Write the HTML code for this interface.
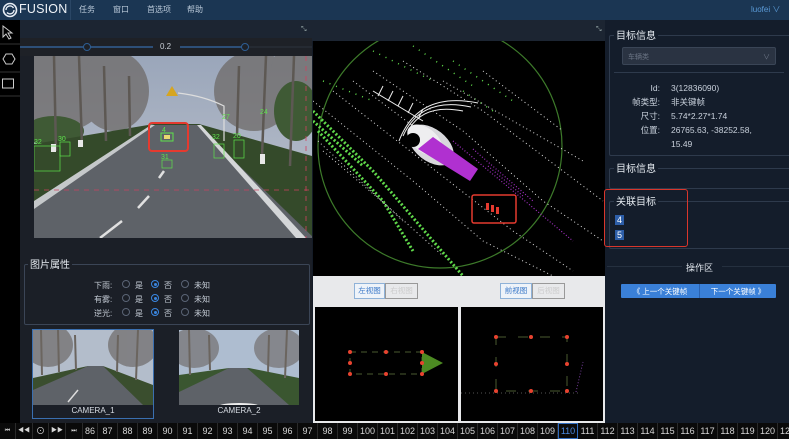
<!DOCTYPE html>
<html><head><meta charset="utf-8"><style>
*{margin:0;padding:0;box-sizing:border-box}
body{width:789px;height:439px;overflow:hidden;background:#141b26;font-family:"Liberation Sans","Noto Sans CJK SC",sans-serif;position:relative;color:#cfd6df}
.a{position:absolute}
.top{left:0;top:0;width:789px;height:20px;background:#1b3653}
.menu{top:4px;font-size:8px;color:#b9c8d8}
.tb{left:0;top:20px;width:20px;height:403px;background:#000}
.lp{left:20px;top:20px;width:292px;height:403px;background:#1b1f27}
.rp{left:605px;top:20px;width:184px;height:403px;background:#141d2b}
.fs{border:1px solid #3b4556;border-radius:2px}
.lg{font-size:10px;color:#e6ebf1;background:#1b1f27;padding:0 2px}
.rad{width:8px;height:8px;border:1px solid #5a6475;border-radius:50%}
.on{border-color:#3a86e0}
.on::after{content:"";position:absolute;left:1.5px;top:1.5px;width:3px;height:3px;border-radius:50%;background:#3a86e0}
.rl{font-size:8px;color:#c5ccd6}
.tl{top:423px;height:16px;background:#0a0a0a;font-size:9px;color:#d6d6d6;text-align:center;line-height:16px;border-right:1px solid #2a2a2a}
.info{font-size:8.5px;color:#c9d1dc}
</style></head><body>
<div class="a top"></div>
<svg class="a" style="left:2px;top:2px" width="16" height="16" viewBox="0 0 16 16"><circle cx="8" cy="8" r="6.5" fill="none" stroke="#e8eef5" stroke-width="1.6"/><path d="M4 8a4 4 0 0 1 7.5-2M12 8a4 4 0 0 1-7 2.5" fill="none" stroke="#e8eef5" stroke-width="1.4"/></svg>
<div class="a" style="left:19px;top:2px;font-size:12.5px;color:#eef2f7;letter-spacing:0.2px">FUSION</div>
<div class="a" style="left:70px;top:0;width:1px;height:20px;background:#2a4665"></div>
<div class="a menu" style="left:79px">任务</div>
<div class="a menu" style="left:113px">窗口</div>
<div class="a menu" style="left:147px">首选项</div>
<div class="a menu" style="left:187px">帮助</div>
<div class="a menu" style="left:751px;color:#5b9bd8">luofei ∨</div>

<div class="a tb"></div>
<svg class="a" style="left:0;top:22px" width="20" height="80"><path d="M3 4v11l3-3 3 5 2-1-3-5h4z" fill="none" stroke="#ccc" stroke-width="1"/><line x1="0" y1="22" x2="20" y2="22" stroke="#333"/><polygon points="6,32 12,32 15,37 12,42 6,42 3,37" fill="none" stroke="#ccc"/><line x1="0" y1="50" x2="20" y2="50" stroke="#333"/><rect x="2.5" y="57" width="11" height="9" fill="none" stroke="#ccc"/><line x1="0" y1="74" x2="20" y2="74" stroke="#333"/></svg>

<div class="a lp"></div>
<div class="a" style="left:20px;top:20px;width:292px;height:18px;background:#1c2532"></div>
<div class="a" style="left:301px;top:26px;font-size:7px;color:#9aa">⤡</div>
<div class="a" style="left:20px;top:38px;width:292px;height:18px;background:#1e2127"></div>
<div class="a" style="left:20px;top:46px;width:133px;height:2px;background:#2d4f78"></div>
<div class="a" style="left:180px;top:46px;width:65px;height:2px;background:#2d4f78"></div>
<div class="a" style="left:245px;top:46px;width:67px;height:2px;background:#252a32"></div>
<div class="a" style="left:83px;top:43px;width:8px;height:8px;border-radius:50%;border:1.5px solid #2d5d93;background:#1e2127"></div>
<div class="a" style="left:241px;top:43px;width:8px;height:8px;border-radius:50%;border:1.5px solid #2d5d93;background:#1e2127"></div>
<div class="a" style="left:160px;top:42px;font-size:8px;color:#c8ced6">0.2</div>

<svg class="a" style="left:34px;top:56px" width="278" height="182" viewBox="0 0 278 182">
<defs><linearGradient id="sky" x1="0" y1="0" x2="0" y2="1"><stop offset="0" stop-color="#9aa6ba"/><stop offset="1" stop-color="#bfc4ce"/></linearGradient></defs>
<rect width="278" height="182" fill="url(#sky)"/>
<g fill="#6e6a68" opacity="0.75"><ellipse cx="30" cy="30" rx="45" ry="45"/><ellipse cx="80" cy="35" rx="35" ry="40"/><ellipse cx="220" cy="35" rx="40" ry="40"/><ellipse cx="265" cy="30" rx="30" ry="50"/></g>
<g fill="#3f5a35"><ellipse cx="20" cy="75" rx="30" ry="15"/><ellipse cx="262" cy="55" rx="22" ry="30"/></g>
<polygon points="0,88 120,68 165,68 278,100 278,182 0,182" fill="#344a2a"/>
<polygon points="118,69 163,69 280,182 0,182 0,148" fill="#5e6268"/>
<polygon points="0,145 117,69 121,69 0,153" fill="#c5c8ca"/>
<polygon points="163,69 167,69 272,182 262,182" fill="#d4d6d8"/>
<g stroke="#5d5853" stroke-width="2.5"><line x1="20" y1="0" x2="22" y2="95"/><line x1="45" y1="0" x2="48" y2="90"/><line x1="70" y1="10" x2="72" y2="85"/><line x1="95" y1="20" x2="96" y2="80"/><line x1="205" y1="10" x2="203" y2="80"/><line x1="232" y1="0" x2="228" y2="100"/><line x1="260" y1="0" x2="256" y2="110"/></g>
<g fill="#e8e8e8"><rect x="17" y="88" width="5" height="8"/><rect x="44" y="84" width="5" height="7"/><rect x="226" y="98" width="5" height="10"/></g>
<polygon points="138,30 132,40 144,40" fill="#d6a520"/>
<path d="M144 37Q170 40 190 50V85" stroke="#ddd" fill="none" stroke-width="1.2"/>
<g stroke="#e0e0e0" stroke-width="2.5"><line x1="130" y1="115" x2="125" y2="122"/><line x1="115" y1="140" x2="104" y2="152"/><line x1="88" y1="165" x2="66" y2="182"/></g>
<line x1="0" y1="134" x2="278" y2="134" stroke="#d04060" stroke-dasharray="5,5" stroke-width="0.8"/>
<line x1="272" y1="0" x2="272" y2="182" stroke="#d04060" stroke-dasharray="5,5" stroke-width="0.8"/>
<rect x="115" y="67" width="39" height="28" rx="3" fill="none" stroke="#e53a2f" stroke-width="2"/>
<rect x="127" y="77" width="12" height="8" fill="none" stroke="#5de24b"/><rect x="130" y="79" width="6" height="4" fill="#e8d870"/>
<g fill="#5de24b" font-size="7" font-family="Liberation Sans"><text x="128" y="76">4</text><text x="127" y="103">31</text><text x="24" y="85">30</text><text x="0" y="88">32</text><text x="178" y="83">32</text><text x="199" y="82">20</text><text x="188" y="63">27</text><text x="226" y="58">24</text></g>
<g fill="none" stroke="#5de24b" stroke-width="0.7"><rect x="128" y="104" width="10" height="8"/><rect x="200" y="84" width="10" height="18"/><rect x="0" y="90" width="26" height="25"/><rect x="26" y="86" width="10" height="14"/><rect x="180" y="88" width="10" height="14"/></g>
</svg>

<div class="a" style="left:20px;top:238px;width:292px;height:185px;background:#1b1f27"></div>
<div class="a fs" style="left:24px;top:264px;width:286px;height:61px"></div>
<div class="a lg" style="left:28px;top:256px">图片属性</div>
<div class="a rl" style="left:94px;top:280px">下雨:</div>
<div class="a rl" style="left:94px;top:294px">有雾:</div>
<div class="a rl" style="left:94px;top:308px">逆光:</div>
<div class="a rad" style="left:122px;top:280px"></div><div class="a rl" style="left:135px;top:280px">是</div>
<div class="a rad on" style="left:151px;top:280px"></div><div class="a rl" style="left:164px;top:280px">否</div>
<div class="a rad" style="left:181px;top:280px"></div><div class="a rl" style="left:194px;top:280px">未知</div>
<div class="a rad" style="left:122px;top:294px"></div><div class="a rl" style="left:135px;top:294px">是</div>
<div class="a rad on" style="left:151px;top:294px"></div><div class="a rl" style="left:164px;top:294px">否</div>
<div class="a rad" style="left:181px;top:294px"></div><div class="a rl" style="left:194px;top:294px">未知</div>
<div class="a rad" style="left:122px;top:308px"></div><div class="a rl" style="left:135px;top:308px">是</div>
<div class="a rad on" style="left:151px;top:308px"></div><div class="a rl" style="left:164px;top:308px">否</div>
<div class="a rad" style="left:181px;top:308px"></div><div class="a rl" style="left:194px;top:308px">未知</div>

<div class="a" style="left:32px;top:329px;width:122px;height:90px;border:1px solid #3a6fb0;background:#1b1f27"></div>
<svg class="a" style="left:33px;top:330px" width="120" height="75"><rect width="120" height="75" fill="#b3bdcb"/><g fill="#6e6a68" opacity="0.7"><ellipse cx="15" cy="15" rx="25" ry="22"/><ellipse cx="100" cy="15" rx="25" ry="22"/></g><polygon points="0,48 55,36 70,36 120,55 120,75 0,75" fill="#3a4e2e"/><polygon points="55,36 70,36 110,75 0,75 0,60" fill="#5e6268"/><g stroke="#6b655f" stroke-width="2"><line x1="8" y1="0" x2="9" y2="45"/><line x1="25" y1="0" x2="26" y2="42"/><line x1="42" y1="5" x2="43" y2="40"/><line x1="85" y1="5" x2="84" y2="42"/><line x1="105" y1="0" x2="103" y2="50"/></g><line x1="45" y1="60" x2="35" y2="72" stroke="#ddd" stroke-width="1.5"/></svg>
<div class="a" style="left:33px;top:406px;width:120px;text-align:center;font-size:8px;color:#d8dde4">CAMERA_1</div>
<svg class="a" style="left:179px;top:330px" width="120" height="75"><rect width="120" height="75" fill="#aebdd0"/><g fill="#6e6a68" opacity="0.65"><ellipse cx="15" cy="18" rx="25" ry="20"/><ellipse cx="100" cy="18" rx="25" ry="20"/></g><polygon points="0,45 50,38 70,38 120,48 120,75 0,75" fill="#3a5630"/><polygon points="50,38 68,38 110,75 0,75 0,62" fill="#5e6268"/><g stroke="#6b655f" stroke-width="2"><line x1="10" y1="0" x2="11" y2="45"/><line x1="30" y1="5" x2="31" y2="40"/><line x1="90" y1="5" x2="89" y2="42"/><line x1="108" y1="0" x2="106" y2="48"/></g><ellipse cx="60" cy="76" rx="20" ry="3" fill="#eee"/></svg>
<div class="a" style="left:179px;top:406px;width:120px;text-align:center;font-size:8px;color:#d8dde4">CAMERA_2</div>

<div class="a" style="left:312px;top:20px;width:294px;height:21px;background:#1c2532"></div>
<div class="a" style="left:596px;top:26px;font-size:7px;color:#9aa">⤡</div>
<svg class="a" style="left:313px;top:41px" width="292" height="235" viewBox="0 0 292 235">
<rect width="292" height="235" fill="#000"/>
<circle cx="127" cy="105" r="122" fill="none" stroke="#3d7a2a" stroke-width="1.2"/>
<g stroke="#5fd84a" stroke-width="3" stroke-dasharray="2,2" fill="none"><path d="M0 70L60 130L120 200L150 235"/><path d="M5 90L70 160L100 210"/><path d="M0 80L50 125"/></g>
<g stroke="#5fd84a" stroke-width="1.5" stroke-dasharray="1,6" fill="none"><path d="M60 10L120 40"/><path d="M100 5L160 45"/><path d="M140 20L200 60"/><path d="M10 40L60 60"/><path d="M150 50L180 70"/></g>
<g stroke="#ddd" stroke-width="1" stroke-dasharray="1,3" fill="none"><path d="M0 60L100 140L170 200L240 235"/><path d="M20 50L110 120L200 190L260 230"/><path d="M60 30L150 90L230 160L290 200"/><path d="M90 20L170 70L250 130L290 160"/><path d="M130 40L200 80L270 120"/><path d="M10 110L80 170L130 215"/><path d="M40 40L120 100"/><path d="M5 100L90 180"/><path d="M170 30L250 90"/></g>
<g stroke="#eee" stroke-width="1" fill="none"><path d="M60 50L110 80M65 55L70 45M75 60L80 50M85 65L90 55M95 72L100 62M105 78L110 68"/><path d="M95 90Q110 62 150 70M90 95Q108 55 158 66M86 100Q105 50 165 62"/></g>
<g transform="rotate(38 118 104)"><ellipse cx="118" cy="104" rx="26" ry="16" fill="#d8d8dc"/><ellipse cx="110" cy="104" rx="20" ry="12" fill="#eeeef0"/></g>
<ellipse cx="100" cy="99" rx="7" ry="7" fill="#000"/>
<polygon points="105,108 120,96 165,128 157,140" fill="#b030d0"/>
<g stroke="#a030c0" stroke-width="1.2" stroke-dasharray="1,2"><path d="M140 100L200 150L260 200M160 108L220 160M175 125L210 155"/></g>
<rect x="159" y="154" width="44" height="28" rx="2" fill="none" stroke="#e53a2f" stroke-width="1.5"/>
<g fill="#e53a2f"><rect x="173" y="162" width="3" height="7"/><rect x="178" y="164" width="3" height="7"/><rect x="183" y="166" width="3" height="7"/></g>
</svg>
<div class="a" style="left:313px;top:276px;width:292px;height:149px;background:#e8e9eb"></div>
<div class="a" style="left:354px;top:283px;width:31px;height:16px;border:1px solid #8fb2d8;font-size:7.5px;color:#3a78c8;line-height:14px;text-align:center;background:#eef3f9">左视图</div>
<div class="a" style="left:385px;top:283px;width:33px;height:16px;border:1px solid #999;font-size:7.5px;color:#ccc;line-height:14px;text-align:center">右视图</div>
<div class="a" style="left:500px;top:283px;width:32px;height:16px;border:1px solid #8fb2d8;font-size:7.5px;color:#3a78c8;line-height:14px;text-align:center;background:#eef3f9">前视图</div>
<div class="a" style="left:532px;top:283px;width:33px;height:16px;border:1px solid #999;font-size:7.5px;color:#ccc;line-height:14px;text-align:center">后视图</div>
<svg class="a" style="left:315px;top:307px" width="143" height="114"><rect width="143" height="114" fill="#000"/><rect x="35" y="45" width="72" height="22" fill="none" stroke="#4a5a30" stroke-dasharray="6,5"/><polygon points="107,45 128,56 107,67" fill="#4c8a22"/><g fill="#e8432f"><circle cx="35" cy="45" r="2"/><circle cx="71" cy="45" r="2"/><circle cx="107" cy="45" r="2"/><circle cx="35" cy="56" r="2"/><circle cx="107" cy="56" r="2"/><circle cx="35" cy="67" r="2"/><circle cx="71" cy="67" r="2"/><circle cx="107" cy="67" r="2"/></g></svg>
<svg class="a" style="left:461px;top:307px" width="142" height="114"><rect width="142" height="114" fill="#000"/><rect x="35" y="30" width="71" height="54" fill="none" stroke="#4a5a30" stroke-dasharray="10,12"/><line x1="0" y1="86" x2="120" y2="86" stroke="#555" stroke-dasharray="1,3"/><path d="M115 85L122 55" stroke="#7a40a0" stroke-dasharray="1,2"/><g fill="#e8432f"><circle cx="35" cy="30" r="2"/><circle cx="70" cy="30" r="2"/><circle cx="106" cy="30" r="2"/><circle cx="35" cy="57" r="2"/><circle cx="106" cy="57" r="2"/><circle cx="35" cy="84" r="2"/><circle cx="70" cy="84" r="2"/><circle cx="106" cy="84" r="2"/></g></svg>

<div class="a rp"></div>
<div class="a fs" style="left:609px;top:35px;width:182px;height:121px;border-color:#2e3a4c"></div>
<div class="a lg" style="left:614px;top:27px;background:#141d2b">目标信息</div>
<div class="a" style="left:622px;top:47px;width:154px;height:18px;background:#2a3342;border:1px solid #3a4556;border-radius:2px;font-size:7px;color:#6c7686;padding:4px 5px">车辆类<span style="float:right">∨</span></div>
<div class="a" style="left:614px;top:72px;width:170px;height:1px;background:#2e3a4c"></div>
<div class="a info" style="left:620px;top:81px;width:40px;text-align:right;line-height:14px">Id:<br>帧类型:<br>尺寸:<br>位置:</div>
<div class="a info" style="left:671px;top:81px;line-height:14px">3(12836090)<br>非关键帧<br>5.74*2.27*1.74<br>26765.63, -38252.58,<br>15.49</div>
<div class="a fs" style="left:609px;top:168px;width:182px;height:21px;border-color:#2e3a4c"></div>
<div class="a lg" style="left:614px;top:160px;background:#141d2b">目标信息</div>
<div class="a fs" style="left:609px;top:201px;width:182px;height:48px;border-color:#2e3a4c"></div>
<div class="a" style="left:604px;top:189px;width:84px;height:58px;border:1.5px solid #d9362c;border-radius:3px"></div>
<div class="a lg" style="left:614px;top:193px;background:#141d2b">关联目标</div>
<div class="a" style="left:615px;top:215px;background:#2d5ea8;color:#fff;font-size:9px;padding:0 2px">4</div>
<div class="a" style="left:615px;top:230px;background:#2d5ea8;color:#fff;font-size:9px;padding:0 2px">5</div>
<div class="a" style="left:607px;top:266px;width:75px;height:1px;background:#25303f"></div>
<div class="a" style="left:722px;top:266px;width:67px;height:1px;background:#25303f"></div>
<div class="a" style="left:686px;top:261px;font-size:9px;color:#dfe5ec">操作区</div>
<div class="a" style="left:621px;top:284px;width:155px;height:14px;background:#3a80d8;border-radius:1px"></div>
<div class="a" style="left:699px;top:284px;width:1px;height:14px;background:#2a62b0"></div>
<div class="a" style="left:621px;top:286px;width:78px;text-align:center;font-size:7.5px;color:#fff">《 上一个关键帧</div>
<div class="a" style="left:700px;top:286px;width:76px;text-align:center;font-size:7.5px;color:#fff">下一个关键帧 》</div>

<div class="a" style="left:0;top:423px;width:789px;height:16px;background:#0a0a0a"></div>
<div class="a tl" style="left:0;width:16px;font-size:6px">⏮</div>
<div class="a tl" style="left:16px;width:17px;font-size:6px">◀◀</div>
<div class="a tl" style="left:33px;width:16px;font-size:9px">⊙</div>
<div class="a tl" style="left:49px;width:17px;font-size:6px">▶▶</div>
<div class="a tl" style="left:66px;width:17px;font-size:6px">⏭</div>
<div class="a tl" style="left:83px;width:15px;overflow:hidden">86</div>
<div class="a tl" style="left:98px;width:20px">87</div><div class="a tl" style="left:118px;width:20px">88</div><div class="a tl" style="left:138px;width:20px">89</div><div class="a tl" style="left:158px;width:20px">90</div><div class="a tl" style="left:178px;width:20px">91</div><div class="a tl" style="left:198px;width:20px">92</div><div class="a tl" style="left:218px;width:20px">93</div><div class="a tl" style="left:238px;width:20px">94</div><div class="a tl" style="left:258px;width:20px">95</div><div class="a tl" style="left:278px;width:20px">96</div><div class="a tl" style="left:298px;width:20px">97</div><div class="a tl" style="left:318px;width:20px">98</div><div class="a tl" style="left:338px;width:20px">99</div><div class="a tl" style="left:358px;width:20px">100</div><div class="a tl" style="left:378px;width:20px">101</div><div class="a tl" style="left:398px;width:20px">102</div><div class="a tl" style="left:418px;width:20px">103</div><div class="a tl" style="left:438px;width:20px">104</div><div class="a tl" style="left:458px;width:20px">105</div><div class="a tl" style="left:478px;width:20px">106</div><div class="a tl" style="left:498px;width:20px">107</div><div class="a tl" style="left:518px;width:20px">108</div><div class="a tl" style="left:538px;width:20px">109</div><div class="a tl" style="left:558px;width:20px;border:1px solid #2f6cc0;color:#4a8ae0;line-height:14px">110</div><div class="a tl" style="left:578px;width:20px">111</div><div class="a tl" style="left:598px;width:20px">112</div><div class="a tl" style="left:618px;width:20px">113</div><div class="a tl" style="left:638px;width:20px">114</div><div class="a tl" style="left:658px;width:20px">115</div><div class="a tl" style="left:678px;width:20px">116</div><div class="a tl" style="left:698px;width:20px">117</div><div class="a tl" style="left:718px;width:20px">118</div><div class="a tl" style="left:738px;width:20px">119</div><div class="a tl" style="left:758px;width:20px">120</div><div class="a tl" style="left:778px;width:20px">121</div>
</body></html>
